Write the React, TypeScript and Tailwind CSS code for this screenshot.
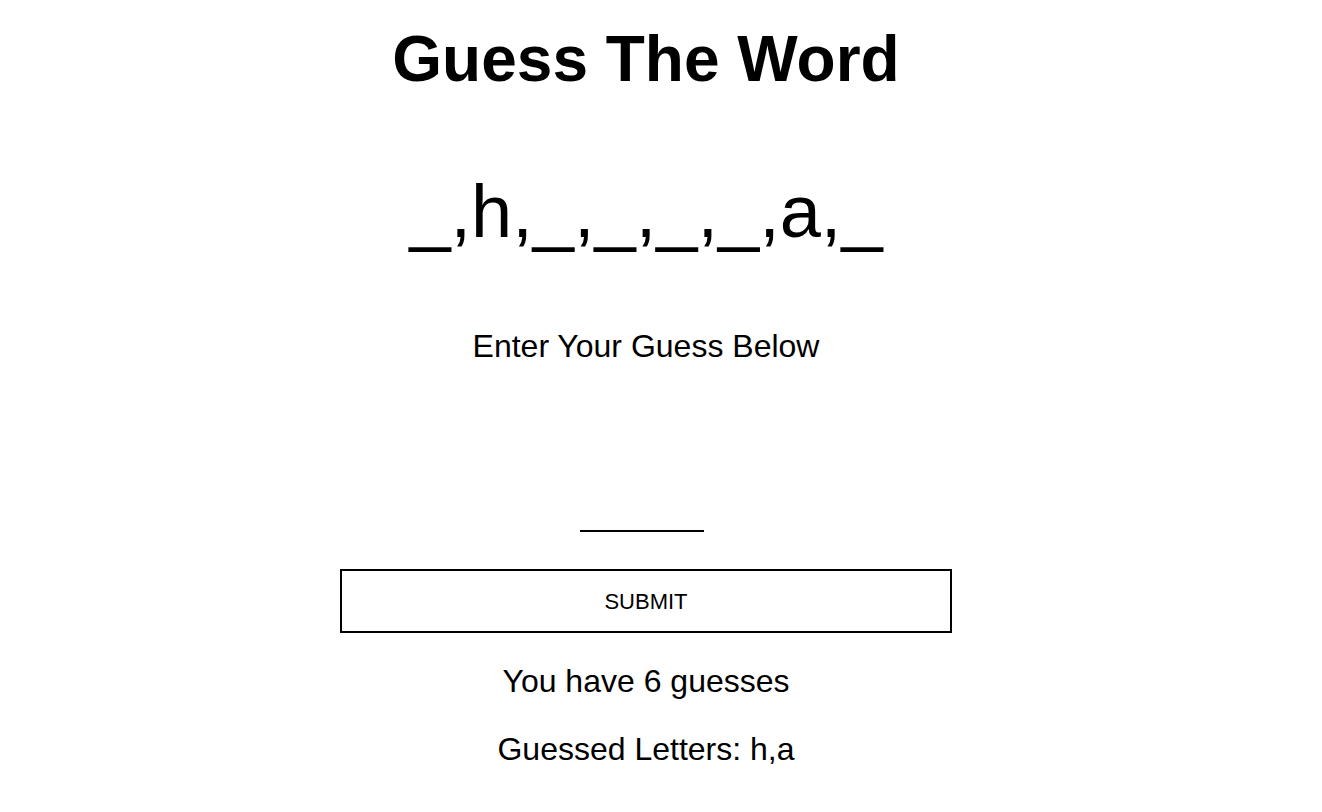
import React, { JSX, useState } from 'react';

const word = ['_', 'h', '_', '_', '_', '_', 'a', '_'];
const guessed = ['h', 'a'];

const App: React.FunctionComponent = (): JSX.Element => {
  const [guess, setGuess] = useState('');

  return (
    <div className="min-h-screen w-full bg-white font-['Liberation_Sans',Arial,sans-serif] text-black">
      <div className="flex w-[1292px] flex-col items-center">
        <h1 className="mt-[22px] text-[64px] font-bold leading-[74px]">Guess The Word</h1>

        <div className="mt-[74px] text-[74px] leading-[84px]">{word.join(',')}</div>

        <p className="mt-[74px] text-[32px] leading-[37px]">Enter Your Guess Below</p>

        {/* guess input, only the underline shows */}
        <input
          value={guess}
          onChange={(e) => setGuess(e.target.value)}
          className="mr-[8px] mt-[127px] h-[40px] w-[124px] border-b-2 border-black bg-transparent text-center text-[20px] outline-none"
        />

        <button className="mt-[37px] h-[64px] w-[612px] border-2 border-black bg-white text-[22px] uppercase">
          Submit
        </button>

        <p className="mt-[30px] text-[32px] leading-[37px]">You have 6 guesses</p>
        <p className="mt-[31px] text-[32px] leading-[37px]">Guessed Letters: {guessed.join(',')}</p>
      </div>
    </div>
  );
};

export default App;
